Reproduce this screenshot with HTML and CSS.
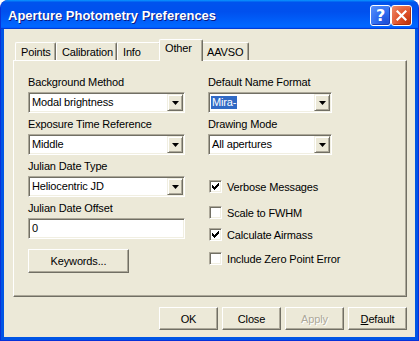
FILE: index.html
```html
<!DOCTYPE html>
<html>
<head>
<meta charset="utf-8">
<link rel="stylesheet" href="styles.css">
</head>
<body>
<div class="window">
  <div class="titlebar">
    <span class="title">Aperture Photometry Preferences</span>
    <div class="tb-buttons">
      <div class="tb-btn help">?</div>
      <div class="tb-btn close">
        <svg width="11" height="11" viewBox="0 0 11 11"><path d="M1.5 1.5 L9.5 9.5 M9.5 1.5 L1.5 9.5" stroke="#fff" stroke-width="2.2" stroke-linecap="square"/></svg>
      </div>
    </div>
  </div>
  <div class="body">
    <div class="tabs">
      <div class="tab t-points">Points</div>
      <div class="tab t-calib">Calibration</div>
      <div class="tab t-info">Info</div>
      <div class="tab t-other selected">Other</div>
      <div class="tab t-aavso">AAVSO</div>
    </div>
    <div class="panel">
      <div class="col col-left">
        <div class="field">
          <div class="label">Background Method</div>
          <div class="combo"><span class="val">Modal brightness</span><span class="drop"><svg width="7" height="4" viewBox="0 0 7 4"><path d="M0 0h7L3.5 4z" fill="#000"/></svg></span></div>
        </div>
        <div class="field">
          <div class="label">Exposure Time Reference</div>
          <div class="combo"><span class="val">Middle</span><span class="drop"><svg width="7" height="4" viewBox="0 0 7 4"><path d="M0 0h7L3.5 4z" fill="#000"/></svg></span></div>
        </div>
        <div class="field">
          <div class="label">Julian Date Type</div>
          <div class="combo"><span class="val">Heliocentric JD</span><span class="drop"><svg width="7" height="4" viewBox="0 0 7 4"><path d="M0 0h7L3.5 4z" fill="#000"/></svg></span></div>
        </div>
        <div class="field">
          <div class="label">Julian Date Offset</div>
          <div class="combo input"><span class="val">0</span></div>
        </div>
        <div class="btn keywords">Keywords...</div>
      </div>
      <div class="col col-right">
        <div class="field">
          <div class="label">Default Name Format</div>
          <div class="combo"><span class="val"><span class="hl">Mira-</span></span><span class="drop"><svg width="7" height="4" viewBox="0 0 7 4"><path d="M0 0h7L3.5 4z" fill="#000"/></svg></span></div>
        </div>
        <div class="field">
          <div class="label">Drawing Mode</div>
          <div class="combo"><span class="val">All apertures</span><span class="drop"><svg width="7" height="4" viewBox="0 0 7 4"><path d="M0 0h7L3.5 4z" fill="#000"/></svg></span></div>
        </div>
        <div class="checks">
          <div class="check c1"><span class="box"><svg width="7" height="7" viewBox="0 0 7 7" shape-rendering="crispEdges"><path d="M0 2h1v3h-1zM1 3h1v3h-1zM2 4h1v3h-1zM3 3h1v3h-1zM4 2h1v3h-1zM5 1h1v3h-1zM6 0h1v3h-1z" fill="#000"/></svg></span><span>Verbose Messages</span></div>
          <div class="check c2"><span class="box"></span><span>Scale to FWHM</span></div>
          <div class="check c3"><span class="box"><svg width="7" height="7" viewBox="0 0 7 7" shape-rendering="crispEdges"><path d="M0 2h1v3h-1zM1 3h1v3h-1zM2 4h1v3h-1zM3 3h1v3h-1zM4 2h1v3h-1zM5 1h1v3h-1zM6 0h1v3h-1z" fill="#000"/></svg></span><span>Calculate Airmass</span></div>
          <div class="check c4"><span class="box"></span><span>Include Zero Point Error</span></div>
        </div>
      </div>
    </div>
    <div class="buttons">
      <div class="btn dlg">OK</div>
      <div class="btn dlg">Close</div>
      <div class="btn dlg disabled">Apply</div>
      <div class="btn dlg"><u>D</u>efault</div>
    </div>
  </div>
</div>
</body>
</html>
```
FILE: styles.css
```css
html, body {
  margin: 0;
  padding: 0;
  background: #ffffff;
}
body {
  font-family: "Liberation Sans", Arial, sans-serif;
  font-size: 11px;
  letter-spacing: -0.15px;
  color: #000;
}
.window {
  width: 419px;
  height: 341px;
  box-sizing: border-box;
  display: flex;
  flex-direction: column;
  background: #0055e5;
  border: 1px solid #0831d9;
  border-top: none;
  border-radius: 8px 8px 0 0;
  overflow: hidden;
}
.titlebar {
  height: 29px;
  flex: none;
  margin: 0 -1px;
  display: flex;
  align-items: center;
  padding: 0 7px 0 8px;
  background: linear-gradient(180deg, #0997ff, #0053ee 8%, #0050ee 40%, #0066ff 88%, #0066ff 93%, #005bff 95%, #003dd7 96%, #003dd7);
  border-radius: 8px 8px 0 0;
}
.title {
  flex: 1;
  color: #fff;
  font-weight: bold;
  font-size: 13px;
  letter-spacing: 0;
  padding-top: 1px;
  text-shadow: 1px 1px #0a1883;
}
.tb-buttons {
  display: flex;
  padding-top: 1px;
}
.tb-btn {
  width: 21px;
  height: 21px;
  box-sizing: border-box;
  border: 1px solid #fff;
  border-radius: 3px;
  display: flex;
  align-items: center;
  justify-content: center;
}
.help {
  background: radial-gradient(circle at 80% 85%, #1d4fd8 0%, #2f6cf0 45%, #5a92fb 100%);
  color: #fff;
  font-weight: bold;
  font-size: 16px;
  font-family: "DejaVu Sans", sans-serif;
  box-shadow: inset -1px -1px #1a3cb8;
}
.close {
  background: radial-gradient(circle at 85% 85%, #c2360f 0%, #e0522a 45%, #ef8f6f 100%);
  box-shadow: inset -1px -1px #b0300c;
}
.body {
  flex: 1;
  margin: 0 3px 3px;
  background: #ece9d8;
  display: flex;
  flex-direction: column;
  padding: 10px 8px 7px 9px;
}
.tabs {
  display: flex;
  align-items: flex-end;
  height: 21px;
  padding-left: 2px;
  position: relative;
  z-index: 1;
}
.tab {
  box-sizing: border-box;
  height: 18px;
  line-height: 13px;
  padding: 3px 0 0 5px;
  background: #ece9d8;
  border-top: 1px solid #fff;
  border-left: 1px solid #fff;
  border-right: 1px solid #716f64;
  box-shadow: inset -1px 0 #aca899;
  border-radius: 2px 2px 0 0;
  white-space: nowrap;
}
.t-points { width: 41px; }
.t-calib { width: 61px; }
.t-info { width: 44px; }
.t-other { width: 44px; }
.t-aavso { width: 48px; }
.tab.selected {
  height: 22px;
  padding-top: 2px;
  margin: 0 -2px -1px;
  position: relative;
  z-index: 2;
}
.panel {
  height: 237px;
  box-sizing: border-box;
  border: 1px solid;
  border-color: #fff #716f64 #716f64 #fff;
  box-shadow: inset -1px -1px #aca899;
  display: flex;
  gap: 23px;
  padding: 15px 0 0 14px;
}
.col {
  display: flex;
  flex-direction: column;
}
.col-left { width: 157px; }
.col-right { width: 124px; }
.field + .field { margin-top: 5px; }
.label {
  height: 13px;
  line-height: 13px;
  margin-bottom: 3px;
  white-space: nowrap;
}
.combo {
  height: 21px;
  box-sizing: border-box;
  display: flex;
  align-items: center;
  background: #fff;
  border: 1px solid;
  border-color: #aca899 #fff #fff #aca899;
  box-shadow: inset 1px 1px #716f64, inset -1px -1px #f1efe2;
  padding: 1px;
}
.val {
  flex: 1;
  padding-left: 2px;
  line-height: 13px;
  white-space: nowrap;
  overflow: hidden;
}
.hl {
  background: #316ac5;
  color: #fff;
  padding: 0 1px;
  display: inline-block;
  margin-left: -1px;
}
.drop {
  width: 16px;
  height: 17px;
  box-sizing: border-box;
  background: #ece9d8;
  border: 1px solid;
  border-color: #f1efe2 #716f64 #716f64 #f1efe2;
  box-shadow: inset 1px 1px #fff, inset -1px -1px #aca899;
  display: flex;
  align-items: center;
  justify-content: center;
}
.btn {
  box-sizing: border-box;
  height: 23px;
  background: #ece9d8;
  border: 1px solid;
  border-color: #fff #716f64 #716f64 #fff;
  box-shadow: inset -1px -1px #aca899;
  display: flex;
  align-items: center;
  justify-content: center;
  white-space: nowrap;
}
.keywords {
  width: 101px;
  height: 24px;
  margin-top: 10px;
}
.checks {
  margin-top: 25px;
  display: flex;
  flex-direction: column;
}
.check {
  display: flex;
  align-items: center;
  height: 13px;
  gap: 5px;
  padding-left: 1px;
  white-space: nowrap;
}
.c2 { margin-top: 13px; }
.c3 { margin-top: 9px; }
.c4 { margin-top: 11px; }
.box {
  width: 13px;
  height: 13px;
  box-sizing: border-box;
  flex: none;
  background: #fff;
  border: 1px solid;
  border-color: #aca899 #fff #fff #aca899;
  box-shadow: inset 1px 1px #716f64, inset -1px -1px #f1efe2;
  padding: 2px 0 0 2px;
  display: flex;
}
.buttons {
  display: flex;
  justify-content: flex-end;
  gap: 4px;
  margin-top: 10px;
}
.dlg { width: 59px; }
.disabled {
  color: #aca899;
  text-shadow: 1px 1px #fff;
}
```
